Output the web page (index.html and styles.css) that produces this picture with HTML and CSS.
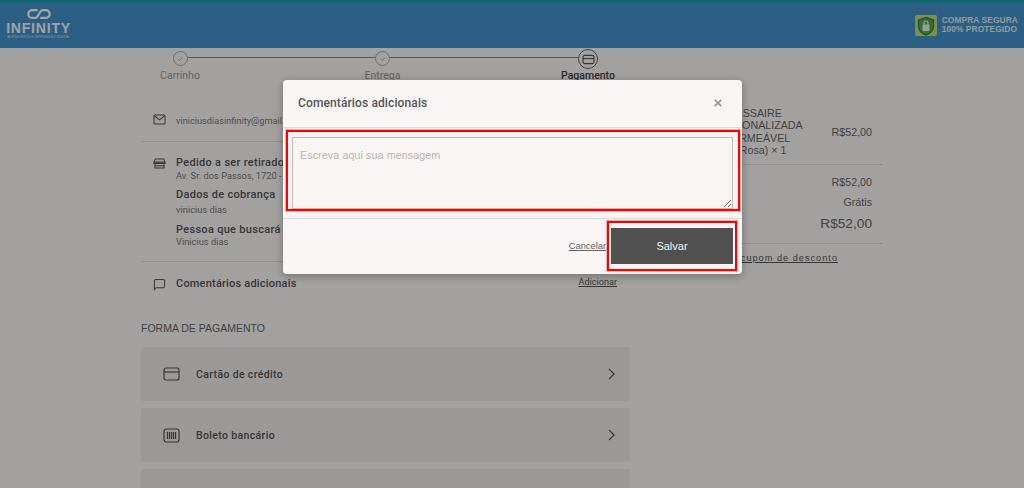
FILE: index.html
```html
<!DOCTYPE html>
<html lang="pt-BR">
<head>
<meta charset="utf-8">
<title>Pagamento</title>
<link rel="stylesheet" href="styles.css">
</head>
<body>
<header class="topbar">
  <div class="brand">
    <svg class="brand-mark" viewBox="0 0 26 11" width="24" height="10" fill="none" stroke="currentColor" stroke-width="2.400"><path d="M11.500 1.200H5.500a4.300 4.300 0 0 0 0 8.600H9c3.500 0 4.500-8.600 8-8.600h3.500a4.300 4.300 0 0 1 0 8.600H14.500"/></svg>
    <div class="brand-name">INFINITY</div>
    <div class="brand-sub">ACESSÓRIOS E IMPRESSÃO DIGITAL</div>
  </div>
  <div class="secure">
    <span class="secure-badge">
      <svg viewBox="0 0 22 22" width="22" height="22"><path d="M11 2.500 18.500 5v6.500c0 4-3.300 6.700-7.500 8.500-4.200-1.800-7.500-4.500-7.500-8.500V5Z" fill="#5aa84f" stroke="#2d8a3a" stroke-width="1.400"/><rect x="7.500" y="9.500" width="7" height="6.500" rx="1" fill="#eef2ea"/><path d="M9 9.500V8a2 2 0 0 1 4 0v1.500" fill="none" stroke="#eef2ea" stroke-width="1.200"/></svg>
    </span>
    <span class="secure-text">COMPRA SEGURA<br>100% PROTEGIDO</span>
  </div>
</header>

<main class="page">
  <section class="checkout">
    <ol class="stepper">
      <li class="step step-first">
        <span class="step-dot"><svg viewBox="0 0 10 10" width="8" height="8" fill="none" stroke="currentColor"><path d="m2.500 5.200 1.800 1.800 3.400-3.800"/></svg></span>
        <span class="step-label">Carrinho</span>
      </li>
      <li class="step step-mid">
        <span class="step-dot"><svg viewBox="0 0 10 10" width="8" height="8" fill="none" stroke="currentColor"><path d="m2.500 5.200 1.800 1.800 3.400-3.800"/></svg></span>
        <span class="step-label">Entrega</span>
      </li>
      <li class="step step-last">
        <span class="step-dot step-dot-on"><svg viewBox="0 0 14 12" width="13" height="11" fill="none" stroke="currentColor" stroke-width="1.200"><rect x="1" y="1.500" width="12" height="9" rx="2"/><path d="M1 5h12"/></svg></span>
        <span class="step-label step-label-on">Pagamento</span>
      </li>
    </ol>

    <div class="row row-email">
      <svg class="row-icon" viewBox="0 0 14 12" width="13" height="11" fill="none" stroke="currentColor" stroke-width="1.100"><rect x="1" y="1" width="12" height="10" rx="1"/><path d="m1.500 2 5.500 4.500L12.500 2"/></svg>
      <span class="email">viniciusdiasinfinity@gmail.com</span>
    </div>

    <div class="row row-pickup">
      <svg class="row-icon icon-store" viewBox="0 0 14 12" width="13" height="11" fill="none" stroke="currentColor" stroke-width="1.100"><path d="M2.500 1h9L13 4.500H1ZM1 4.500h12V6H1ZM2 6v5h10V6M2 8.500h10"/></svg>
      <div class="pickup">
        <h3 class="title">Pedido a ser retirado</h3>
        <p class="detail">Av. Sr. dos Passos, 1720 - Centro</p>
        <h3 class="title title-gap">Dados de cobrança</h3>
        <p class="detail detail-gap">vinicius dias</p>
        <h3 class="title title-gap2">Pessoa que buscará</h3>
        <p class="detail detail-tight">Vinicius dias</p>
      </div>
    </div>

    <div class="row row-comment">
      <svg class="row-icon" viewBox="0 0 14 14" width="13" height="13" fill="none" stroke="currentColor" stroke-width="1.100"><path d="M1.500 12.500V3a1.500 1.500 0 0 1 1.500-1.500h8A1.500 1.500 0 0 1 12.500 3v6A1.500 1.500 0 0 1 11 10.500H3.500Z"/></svg>
      <h3 class="title">Comentários adicionais</h3>
      <a class="add-link" href="#">Adicionar</a>
    </div>

    <h2 class="pay-heading">FORMA DE PAGAMENTO</h2>
    <div class="pay-list">
      <div class="pay-card">
        <svg class="pay-icon" viewBox="0 0 17 14" width="17" height="14" fill="none" stroke="currentColor" stroke-width="1.200"><rect x="1" y="1" width="15" height="12" rx="2"/><path d="M1 5h15"/></svg>
        <span class="pay-name">Cartão de crédito</span>
        <svg class="chevron" viewBox="0 0 8 14" width="7" height="12" fill="none" stroke="currentColor" stroke-width="1.400"><path d="m1 1 6 6-6 6"/></svg>
      </div>
      <div class="pay-card">
        <svg class="pay-icon" viewBox="0 0 17 15" width="17" height="15" fill="none" stroke="currentColor" stroke-width="1.200"><rect x="1" y="1" width="15" height="13" rx="2.500"/><path d="M4.500 4v7M6.500 4v7M8.500 4v7M10.500 4v7M12.500 4v7"/></svg>
        <span class="pay-name">Boleto bancário</span>
        <svg class="chevron" viewBox="0 0 8 14" width="7" height="12" fill="none" stroke="currentColor" stroke-width="1.400"><path d="m1 1 6 6-6 6"/></svg>
      </div>
      <div class="pay-card"></div>
    </div>
  </section>

  <aside class="summary">
    <div class="item">
      <p class="item-name">NECESSAIRE<br>PERSONALIZADA<br>IMPERMEÁVEL<br>(Cor: Rosa) × 1</p>
      <span class="price">R$52,00</span>
    </div>
    <div class="totals">
      <div class="total-line"><span>Subtotal</span><span>R$52,00</span></div>
      <div class="total-line total-ship"><span>Entrega</span><span>Grátis</span></div>
      <div class="total-line total-main"><span>Total</span><span>R$52,00</span></div>
    </div>
    <a class="coupon" href="#">Adicionar cupom de desconto</a>
  </aside>
</main>

<div class="scrim">
  <div class="modal">
    <div class="modal-head">
      <h2 class="modal-title">Comentários adicionais</h2>
      <svg class="modal-close" viewBox="0 0 10 10" width="8" height="8" fill="none" stroke="currentColor" stroke-width="2.200"><path d="m1 1 8 8M9 1 1 9"/></svg>
    </div>
    <div class="mark mark-text">
      <textarea class="message" placeholder="Escreva aqui sua mensagem"></textarea>
    </div>
    <div class="modal-foot">
      <a class="cancel" href="#">Cancelar</a>
      <div class="mark mark-save"><button class="save" type="button">Salvar</button></div>
    </div>
  </div>
</div>
</body>
</html>
```

FILE: styles.css
```css
* { box-sizing: border-box; }
html, body { margin: 0; height: 100%; }
body {
  position: relative;
  height: 488px;
  overflow: hidden;
  background: #f9f7f5;
  color: #555;
  font-family: Roboto, "Liberation Sans", sans-serif;
}
h2, h3, p, ol { margin: 0; padding: 0; }
a { color: inherit; }

.topbar {
  height: 48px;
  display: flex;
  justify-content: space-between;
  align-items: center;
  padding: 0 6px 0 7px;
  background: #4492cd;
  border-top: 2px solid #10a3a5;
  color: #fff;
}
.brand { display: flex; flex-direction: column; align-items: center; width: 63px; margin-top: -2px; }
.brand-mark { display: block; }
.brand-name { font: 700 14px/14px "Liberation Sans", sans-serif; letter-spacing: .8px; margin-top: 2px; opacity: .95; }
.brand-sub { font: 3.500px/5px "Liberation Sans", sans-serif; white-space: nowrap; opacity: .7; }
.secure { display: flex; align-items: center; gap: 5px; }
.secure-badge { display: block; width: 22px; height: 21px; background: #c4dc7e; border-radius: 2px; overflow: hidden; }
.secure-badge svg { display: block; }
.secure-text { font: 700 8.400px/9px "Liberation Sans", sans-serif; color: #fff; opacity: .82; letter-spacing: .1px; }

.page { display: flex; padding-left: 141px; }
.checkout { width: 489px; flex: none; }

.stepper { position: relative; list-style: none; display: flex; justify-content: space-between; padding-top: 1px; height: 50px; }
.stepper::before { content: ""; position: absolute; left: 46px; right: 52px; top: 9px; height: 1px; background: #888; }
.step { position: relative; display: flex; flex-direction: column; align-items: center; width: 78px; }
.step-last { width: 84px; }
.step-dot {
  width: 15px; height: 15px; margin-top: 2px;
  display: flex; align-items: center; justify-content: center;
  border: 1px solid #aaa; border-radius: 50%;
  background: #f9f7f5; color: #999;
}
.step-dot-on { width: 20px; height: 20px; margin-top: 0; border-color: #666; color: #555; }
.step-label { font-size: 10.500px; line-height: 12px; margin-top: 4px; color: #999; }
.step-label-on { margin-top: 1px; color: #444; font-weight: 500; }

.row { display: flex; border-bottom: 1px solid #dedcda; }
.row-icon { flex: none; margin: 0 10px 0 12px; color: #555; }
.row-email { height: 44px; align-items: center; }
.row-email .row-icon { margin-top: -1px; }
.email { font-size: 9.200px; color: #777; margin-top: 2px; }

.row-pickup { height: 120px; padding-top: 14px; }
.icon-store { margin-top: 2px; }
.title { font-size: 11px; line-height: 14px; font-weight: 500; letter-spacing: .3px; color: #555; }
.detail { font-size: 9.300px; line-height: 12px; color: #777; }
.title-gap { margin-top: 6px; }
.detail-gap { margin-top: 2px; }
.title-gap2 { margin-top: 7px; }
.detail-tight { margin-top: -1px; }

.row-comment { height: 44px; align-items: center; border-bottom: 0; }
.row-comment .title { flex: 1; letter-spacing: .2px; }
.row-comment .row-icon { margin-top: 0; }
.add-link { font-size: 9.100px; margin: -4px 13px 0 0; color: #555; }

.pay-heading { font: 400 10.500px/12px "Liberation Sans", sans-serif; color: #666; margin-top: 16px; }
.pay-list { display: flex; flex-direction: column; gap: 7px; margin-top: 13px; }
.pay-card {
  height: 54px; flex: none;
  display: flex; align-items: center;
  padding: 0 15px 0 22px;
  background: #efecea;
  border-radius: 2px;
}
.pay-icon { flex: none; color: #555; }
.pay-name { flex: 1; margin-left: 16px; margin-top: 1px; font-size: 10.500px; font-weight: 500; letter-spacing: .35px; color: #555; }
.chevron { flex: none; color: #555; }

.summary { width: 243px; margin-left: 10px; padding-top: 55px; font-family: "Liberation Sans", sans-serif; }
.item { display: flex; align-items: center; justify-content: space-between; height: 62px; padding: 0 11px 4px 73px; border-bottom: 1px solid #dedcda; }
.item-name { font-size: 10.700px; line-height: 12.500px; color: #666; }
.price { font-size: 10.700px; color: #666; }
.totals { border-bottom: 1px solid #dedcda; height: 79px; padding: 10px 11px 0 30px; }
.total-line { display: flex; justify-content: space-between; font-size: 10.700px; line-height: 14px; color: #666; }
.total-ship { margin-top: 6px; }
.total-main { margin-top: 6px; font-size: 13.700px; line-height: 18px; }
.coupon { display: block; margin: 9px 0 0 -40px; font-size: 9.200px; letter-spacing: 1px; color: #555; text-align: right; width: 238px; }

.scrim {
  position: absolute; inset: 0;
  background: rgba(0, 0, 0, .35);
}
.modal {
  position: absolute; left: 283px; top: 80px;
  width: 459px; height: 194px;
  background: #f8f5f4;
  border-radius: 4px;
  box-shadow: 0 2px 8px rgba(0, 0, 0, .3);
  font-family: "Liberation Sans", sans-serif;
}
.modal-head {
  height: 48px;
  display: flex; align-items: center; justify-content: space-between;
  padding: 0 20px 2px 15px;
  border-bottom: 1px solid #dcdad8;
}
.modal-title { font: 500 12px Roboto, sans-serif; letter-spacing: .12px; color: #555; }
.modal-close { color: #999; }
.mark { border: 2px solid #f00; box-shadow: 0 0 0 1px rgba(255, 110, 110, .55); }
.mark-text { margin: 2px 2px 0 3px; height: 81px; padding: 5px 5px 0 4px; }
.message {
  display: block; width: 441px; height: 72px;
  padding: 11px 7px;
  background: #f8f5f4;
  border: 1px solid #bdbbb9;
  font: 10.700px "Liberation Sans", sans-serif;
  letter-spacing: .1px;
  outline: 0;
}
.message::placeholder { color: #b8b6b4; opacity: 1; }
.modal-foot {
  margin-top: 7px;
  height: 56px;
  display: flex; align-items: flex-start; justify-content: flex-end;
  padding: 2px 5px 0 0;
  border-top: 1px solid #dcdad8;
}
.cancel { font: 9.300px/12px "Liberation Sans", sans-serif; color: #666; margin-top: 19px; }
.mark-save { width: 130px; height: 50px; padding: 5px 2px; margin-left: 1px; }
.save {
  display: block; width: 122px; height: 36px;
  border: 0; padding: 0; background: #505050;
  color: #f4f4f4; font: 400 11px "Liberation Sans", sans-serif;
}
```
